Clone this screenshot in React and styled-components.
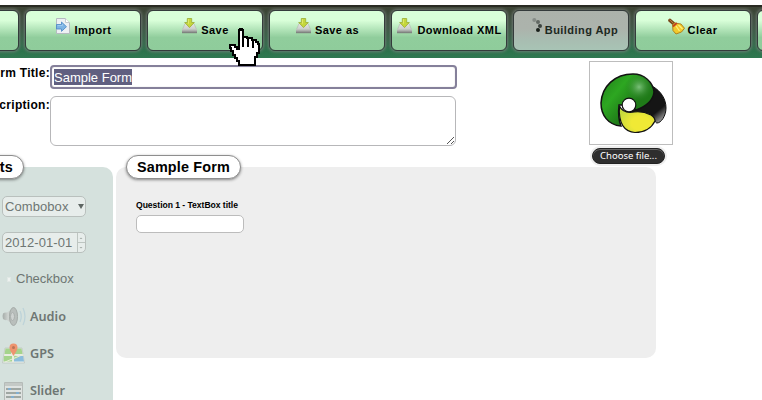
import React from "react";
import styled, { createGlobalStyle } from "styled-components";

const Global = createGlobalStyle`
  *, *::before, *::after { box-sizing: border-box; }
  html, body { margin: 0; background: #fff; overflow: hidden; }
  body { font-family: "Liberation Sans", Arial, sans-serif; color: #000; }
  svg { display: block; flex: none; }
`;

const Page = styled.div`
  position: relative;
  width: 762px;
  height: 400px;
  overflow: hidden;
`;

const Toolbar = styled.header`
  display: flex;
  gap: 6px;
  height: 53px;
  margin-top: 5px;
  padding-top: 3px;
  border-top: 2px solid #292a22;
  background: linear-gradient(#3d4435 0%, #3b5240 35%, #2e744d 88%, #2f7850 100%);
`;

const ToolButton = styled.button`
  flex: none;
  display: flex;
  align-items: flex-start;
  justify-content: center;
  gap: ${(p) => p.$gap ?? 4}px;
  width: 116px;
  height: 41px;
  margin: 0;
  padding: 7px ${(p) => p.$right ?? 0}px 0 ${(p) => p.$left ?? 0}px;
  border: 1px solid #343b3b;
  border-radius: 6px;
  box-shadow: 0 0 3px 1px rgba(125, 130, 128, 0.75);
  background: ${(p) =>
    p.$busy
      ? "linear-gradient(#acb2ab 0%, #acb3ac 45%, #a8bdb1 75%, #a8c4b5 100%)"
      : "linear-gradient(#d9ffd9 0%, #d9ffd9 24%, #90cd9c 68%, #8fcc9b 100%)"};
  color: ${(p) => (p.$busy ? "#1d2922" : "#000")};
  font: bold 11px/15px "Liberation Sans", Arial, sans-serif;
  letter-spacing: 0.45px;
  white-space: nowrap;

  &:first-child { margin-left: -97px; }
`;

const ButtonText = styled.span`
  margin-top: 5px;
`;

const Details = styled.section`
  display: flex;
  height: 109px;
`;

const Fields = styled.div`
  display: flex;
  flex-direction: column;
  gap: 7px;
  width: 589px;
  padding-top: 7px;
`;

const FieldRow = styled.div`
  display: flex;
  margin-left: -50px;
`;

const FieldLabel = styled.label`
  width: 100px;
  flex: none;
  padding-top: ${(p) => p.$drop ?? 0}px;
  text-align: right;
  font-weight: bold;
  font-size: 12px;
  line-height: 16px;
  letter-spacing: 0.3px;
  white-space: nowrap;
`;

const TitleField = styled.div`
  width: 407px;
  height: 24px;
  padding: 2px;
  border: 2px solid #85809a;
  border-radius: 4px;
  box-shadow: inset 0 0 1px #aaa;
  font-size: 13px;
  line-height: 15px;
`;

const Selected = styled.span`
  display: block;
  height: 16px;
  width: 78px;
  line-height: 17px;
  background: #605f80;
  color: #fff;
  letter-spacing: 0;
  white-space: nowrap;
`;

const DescriptionField = styled.div`
  display: flex;
  align-items: flex-end;
  justify-content: flex-end;
  width: 406px;
  height: 50px;
  padding: 0;
  border: 1px solid #b7b7b9;
  border-radius: 6px;
`;

const LogoColumn = styled.div`
  display: flex;
  flex-direction: column;
  align-items: center;
  gap: 3px;
  width: 84px;
  padding-top: 3px;
`;

const LogoFrame = styled.div`
  flex: none;
  width: 84px;
  height: 84px;
  border: 1px solid #bdbdbd;
`;

const FileButton = styled.button`
  flex: none;
  width: 73px;
  height: 16px;
  padding: 0 0 1px;
  margin-right: 5px;
  border: 1px solid #222;
  border-radius: 8px;
  box-shadow: 0 0 0 2px #eee, inset 0 1px 0 #666;
  background: #2e2e2e;
  color: #fff;
  font: 9.5px/13px "Noto Sans", "Open Sans", sans-serif;
  white-space: nowrap;
`;

const Panels = styled.main`
  display: flex;
  gap: 3px;
  align-items: flex-start;
`;

const ToolsPanel = styled.aside`
  position: relative;
  width: 113px;
  height: 233px;
  padding: 29px 0 0 2px;
  border-top-right-radius: 10px;
  background: #d5e1dd;
  color: #6e7673;
`;

const Canvas = styled.section`
  position: relative;
  width: 540px;
  height: 191px;
  padding: 32px 20px 0;
  border-radius: 10px;
  background: #eee;
`;

const Legend = styled.h2`
  position: absolute;
  top: -12px;
  left: ${(p) => p.$left}px;
  width: ${(p) => p.$width}px;
  height: 24px;
  margin: 0;
  padding-right: ${(p) => p.$end ?? 0}px;
  border: 1px solid #8e8e8e;
  border-radius: 12px;
  box-shadow: 0 1px 3px rgba(0, 0, 0, 0.45);
  background: #fff;
  color: #000;
  font-size: 14.4px;
  line-height: 22px;
  text-align: ${(p) => (p.$end ? "right" : "center")};
  letter-spacing: 0.18px;
  white-space: nowrap;
`;

const Control = styled.div`
  display: flex;
  width: 84px;
  height: 21px;
  margin-bottom: 15px;
  padding-left: 2px;
  border: 1px solid #b9c0bd;
  border-radius: 5px;
  background: #e7edeb;
  font-size: 13px;
  line-height: 19px;
  justify-content: space-between;
  letter-spacing: 0.08px;
  white-space: nowrap;
`;

const CheckRow = styled.div`
  display: flex;
  align-items: center;
  gap: 5px;
  height: 17px;
  margin: 17px 0 19px 5px;
  font-size: 13px;
`;

const CheckMark = styled.span`
  width: 4px;
  height: 5px;
  margin-top: 2px;
  border: 1px solid #e1e8e5;
  background: #eef2f0;
`;

const MediaRow = styled.div`
  display: flex;
  align-items: center;
  height: 22px;
  margin-bottom: 15px;
  gap: 4px;
  font: 600 12.7px/20px "Noto Sans", "Open Sans", sans-serif;
`;

const MediaText = styled.span`
  margin-top: -2px;
`;

const Question = styled.div`
  height: 12px;
  font-size: 8.6px;
  line-height: 12px;
  font-weight: bold;
  letter-spacing: -0.04px;
  white-space: nowrap;
`;

const Answer = styled.div`
  width: 108px;
  height: 18px;
  margin-top: 4px;
  border: 1px solid #bcbcbc;
  border-radius: 5px;
  background: #fff;
`;

const Cursor = styled.svg`
  position: absolute;
  left: 229px;
  top: 27px;
  z-index: 2;
`;

const ImportIcon = () => (
  <svg width="16" height="17" viewBox="0 0 16 17">
    <path d="M1.5 .5h9l4 4v11h-13z" fill="#edf0f3" stroke="#b5bbc0" />
    <path d="M10.5.5v4h4" fill="#fff" stroke="#c5cace" />
    <path d="M1.500 6.500h5V4l5 4.700-5 4.700V11h-5z" fill="#7fb4e4" stroke="#4a86c4" strokeWidth=".8" />
    <path d="M2.500 7.500h5V6" fill="none" stroke="#a9d2f5" strokeWidth=".7" />
  </svg>
);

const SaveIcon = () => (
  <svg width="17" height="17" viewBox="0 0 17 17">
    <defs>
      <linearGradient id="drive" x2="0" y2="1">
        <stop stopColor="#e4e7e4" /><stop offset="1" stopColor="#c9ccca" />
      </linearGradient>
      <linearGradient id="driveFront" x2="0" y2="1">
        <stop stopColor="#c6c8c6" /><stop offset="1" stopColor="#6f736f" />
      </linearGradient>
    </defs>
    <path d="M4 5.500h9l2.500 6H1.500z" fill="url(#drive)" stroke="#b0b5b0" strokeWidth=".6" />
    <path d="M1 11.500h15v3.700H1z" fill="url(#driveFront)" />
    <path d="M6.300.5h4.400v4h2.600L8.500 9.600 3.700 4.500h2.600z" fill="#c5d73c" stroke="#9bac35" strokeWidth=".8" />
    <path d="M7.500 1.200v4.500" stroke="#dfe968" />
  </svg>
);

const SpinnerIcon = () => (
  <svg width="16" height="17" viewBox="0 0 16 17">
    <circle cx="5.300" cy="2" r="2" fill="#868c87" />
    <circle cx="9" cy="4" r="2" fill="#626964" />
    <circle cx="11" cy="8" r="2" fill="#3c433e" />
    <circle cx="9" cy="12" r="2" fill="#19201b" />
  </svg>
);

const BroomIcon = () => (
  <svg width="17" height="17" viewBox="0 0 17 17">
    <path d="M2 2.500l3.500 3" stroke="#7a4a1d" strokeWidth="3.600" strokeLinecap="round" />
    <path d="M2 2l3 3" stroke="#b8763b" strokeLinecap="round" />
    <path d="M6.500 5l6.500 1 3.500 4.300-3 3.700-5.500 2-3-3.400-.5-5.700z" fill="#f2c92d" stroke="#aa7b18" strokeWidth=".9" />
    <path d="M8 8l3.500 5M10.500 7l4 4" stroke="#fff079" strokeWidth="1.300" />
    <path d="M5 8.500L8.800 5" stroke="#c4401f" strokeWidth="1.700" />
  </svg>
);

const Logo = () => (
  <svg width="82" height="82" viewBox="0 0 82 82">
    <defs>
      <radialGradient id="greenShine" gradientUnits="userSpaceOnUse" cx="49" cy="25" r="14">
        <stop stopColor="#7ac079" /><stop offset="1" stopColor="#25821f" stopOpacity="0" />
      </radialGradient>
      <linearGradient id="green" x1="0" y1="0" x2="1" y2=".8">
        <stop stopColor="#207a19" /><stop offset=".35" stopColor="#2da721" /><stop offset=".65" stopColor="#1f7a18" />
      </linearGradient>
      <radialGradient id="yellow" cx=".6" cy=".65" r=".65">
        <stop offset=".4" stopColor="#f0e935" /><stop offset="1" stopColor="#c6da3d" />
      </radialGradient>
      <linearGradient id="black" x1=".3" y1=".2" x2=".9" y2="1">
        <stop offset=".65" stopColor="#151515" /><stop offset="1" stopColor="#bbb" />
      </linearGradient>
    </defs>
    <path d="M62 24C71 29 76 37 76 46C76 54 71 61 67 61C65 61 65 57 62 54C57 51 49 54 42 50C48 40 58 38 62 24Z" fill="url(#black)" stroke="#111" />
    <path d="M31 64C18 63 11 53 11 41C12 24 25 12 43 12C54 12 63 20 64 30C63 40 54 45 46 48L39 43L29 43C28 52 29 59 31 64Z" fill="url(#green)" stroke="#111" strokeWidth="1.500" />
    <path d="M31 64C18 63 11 53 11 41C12 24 25 12 43 12C54 12 63 20 64 30C63 40 54 45 46 48L39 43L29 43Z" fill="url(#greenShine)" />
    <path d="M29.500 44C32 50 37 51 44 50C51 49 57 51 61 53C64 55 65 57 65 59C61 67 54 70.500 45 70.500C35 70 28 62 29.500 44Z" fill="url(#yellow)" stroke="#111" strokeWidth="1.200" />
    <circle cx="39" cy="43" r="6.800" fill="#fff" stroke="#111" strokeWidth="1.200" />
  </svg>
);

const AudioIcon = () => (
  <svg width="24" height="22" viewBox="0 0 24 22">
    <defs>
      <linearGradient id="horn"><stop stopColor="#a5aba8" /><stop offset=".5" stopColor="#d0d5d2" /><stop offset="1" stopColor="#a9afac" /></linearGradient>
    </defs>
    <path d="M1 7.500q1.500-1.500 4-1L12 1.500v18l-7-5.500q-2.500.5-4-1-1-2.500 0-5.500z" fill="url(#horn)" />
    <ellipse cx="11.500" cy="10.500" rx="4" ry="9" fill="#b9bfbc" stroke="#a5aba8" />
    <ellipse cx="10.500" cy="10.500" rx="2" ry="4" fill="#cfd3d1" stroke="#aab0ad" />
    <path d="M18 5q2.500 5.500 0 11M21 2q4 8.500 0 17" fill="none" stroke="#bdd3d9" strokeWidth="1.300" />
  </svg>
);

const MapIcon = () => (
  <svg width="24" height="22" viewBox="0 0 24 22">
    <path d="M3 5h17l2.500 15H.5z" fill="#e9eee8" stroke="#b7beb9" strokeWidth=".6" />
    <path d="M3.500 5.500h6.500l-1 5.500H2.500zM13 5.500h6.500l1 5.500H12zM2 13h8v5.500H1.500z" fill="#a5d48c" />
    <path d="M12 13h9l1 5.500h-10z" fill="#8bbddd" />
    <path d="M12 12.500l6 1-6 3z" fill="#a9d593" />
    <path d="M2 12h20M11 6v13M3 19l17-7" stroke="#e9edda" />
    <path d="M11.500 13C9 9 7.500 7 7.500 4.500a4 4 0 018 0c0 2.500-1.500 4.500-4 8.500z" fill="#ee946f" />
    <circle cx="11.500" cy="4.500" r="1.500" fill="#b97558" />
  </svg>
);

const SliderIcon = () => (
  <svg width="24" height="22" viewBox="0 0 24 22">
    <path d="M2.500 2.500h18v19h-18z" fill="#dfe3e1" stroke="#b5bbb8" />
    <path d="M3 3h17v3H3z" fill="#c4c9c6" />
    <path d="M4 9h15M4 13h15M4 17h15" stroke="#8b948f" strokeWidth="1.300" />
    <path d="M6 8h3v2H6zM14 12h3v2h-3zM9 16h3v2H9z" fill="#82aed0" />
  </svg>
);

const HandCursor = () => (
  <Cursor width="32" height="42" viewBox="0 0 32 42">
    <path
      d="M10 3h1V2h2v1h1v7h4v1h5v2h4v2h2v2h1v9h-2v4h-2v8H10v-4H8v-3H6v-3H4v-4H2v-3H1v-3h5v2h2v2h2z"
      fill="#fff" stroke="#000" strokeWidth="1.500" strokeLinejoin="miter" shapeRendering="crispEdges"
    />
    <path d="M14 9v11M19 12v8M24 14v7" stroke="#000" strokeWidth="1.500" shapeRendering="crispEdges" />
  </Cursor>
);

export default function App() {
  return (
    <Page>
      <Global />
      <Toolbar>
        <ToolButton />
        <ToolButton><ImportIcon /><ButtonText>Import</ButtonText></ToolButton>
        <ToolButton $gap={3}><SaveIcon /><ButtonText>Save</ButtonText></ToolButton>
        <ToolButton $gap={3}><SaveIcon /><ButtonText>Save as</ButtonText></ToolButton>
        <ToolButton><SaveIcon /><ButtonText>Download XML</ButtonText></ToolButton>
        <ToolButton $busy $gap={0} $left={5}><SpinnerIcon /><ButtonText>Building App</ButtonText></ToolButton>
        <ToolButton $gap={3} $right={1}><BroomIcon /><ButtonText>Clear</ButtonText></ToolButton>
        <ToolButton />
      </Toolbar>
      <Details>
        <Fields>
          <FieldRow>
            <FieldLabel>Form Title:</FieldLabel>
            <TitleField><Selected>Sample Form</Selected></TitleField>
          </FieldRow>
          <FieldRow>
            <FieldLabel $drop={1}>Description:</FieldLabel>
            <DescriptionField>
              <svg width="9" height="9" viewBox="0 0 9 9"><path d="M1 8l7-7M5 8l3-3" stroke="#555" /></svg>
            </DescriptionField>
          </FieldRow>
        </Fields>
        <LogoColumn>
          <LogoFrame><Logo /></LogoFrame>
          <FileButton>Choose file...</FileButton>
        </LogoColumn>
      </Details>
      <Panels>
        <ToolsPanel>
          <Legend $left={-36} $width={60} $end={10}>ts</Legend>
          <Control>
            <span>Combobox</span>
            <svg width="8" height="19" viewBox="0 0 8 19"><path d="M1 7h6l-3 5z" fill="#5e6663" /></svg>
          </Control>
          <Control>
            <span>2012-01-01</span>
            <svg width="8" height="19" viewBox="0 0 8 19">
              <path d="M.5 0v19M0 9.500h8" stroke="#bdc5c1" />
              <path d="M2.500 6L4 4.500 5.500 6zM2.500 14L4 15.500 5.500 14z" fill="#a5ada9" />
            </svg>
          </Control>
          <CheckRow><CheckMark />Checkbox</CheckRow>
          <MediaRow><AudioIcon /><MediaText>Audio</MediaText></MediaRow>
          <MediaRow><MapIcon /><MediaText>GPS</MediaText></MediaRow>
          <MediaRow><SliderIcon /><MediaText>Slider</MediaText></MediaRow>
        </ToolsPanel>
        <Canvas>
          <Legend $left={10} $width={115}>Sample Form</Legend>
          <Question>Question 1 - TextBox title</Question>
          <Answer />
        </Canvas>
      </Panels>
      <HandCursor />
    </Page>
  );
}
